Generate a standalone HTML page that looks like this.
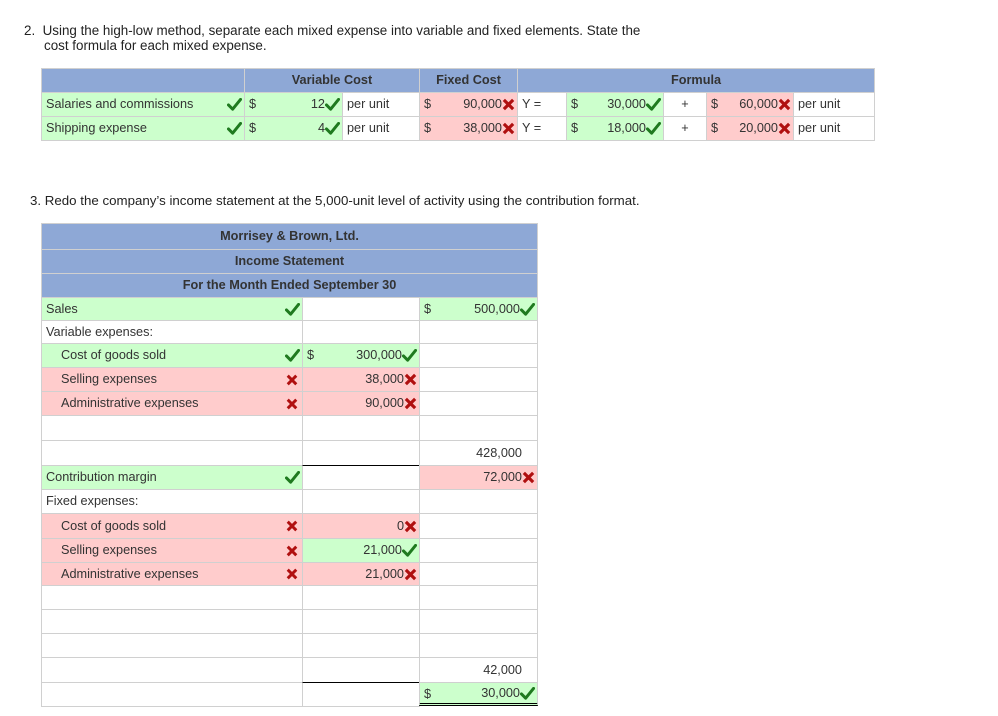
<!DOCTYPE html>
<html><head><meta charset="utf-8">
<style>
*{margin:0;padding:0}
body{width:998px;height:716px;background:#fff;position:relative;font-family:"Liberation Sans",Arial,sans-serif;font-size:12.7px;color:#333;overflow:hidden}
.t{position:absolute;white-space:nowrap;font-size:13.3px;color:#222}
.c{position:absolute;box-sizing:border-box;border:1px solid #d0d0d0;background:#fff;white-space:nowrap}
.g{background:#ccffcc}.p{background:#ffcccc}.h{background:#8ea8d6;font-weight:bold;text-align:center;color:#333}
.l{position:absolute;left:4px;top:0}
.r{position:absolute;right:2px;top:0;display:flex;align-items:center;height:100%}
.ic{display:inline-block;vertical-align:middle}
</style></head><body>
<svg width="0" height="0" style="position:absolute">
<defs>
<symbol id="ck" viewBox="0 0 16 14"><path d="M1.5 7.5 L6 12 L14.5 1.5" stroke="#1f7a1f" stroke-width="3.2" fill="none" stroke-linecap="round" stroke-linejoin="round"/></symbol>
<symbol id="xx" viewBox="0 0 14 14"><path d="M2 2 L12 12 M12 2 L2 12" stroke="#b01010" stroke-width="3.4" fill="none"/></symbol>
</defs></svg>

<div class="t" style="left:24px;top:23px;font-size:13.4px">2.&nbsp; Using the high-low method, separate each mixed expense into variable and fixed elements. State the</div>
<div class="t" style="left:44px;top:38px;font-size:13.4px">cost formula for each mixed expense.</div>

<!-- table 1 -->
<div class="c h" style="left:41px;top:68px;width:204px;height:25px"></div>
<div class="c h" style="left:244px;top:68px;width:176px;height:25px;line-height:23px">Variable Cost</div>
<div class="c h" style="left:419px;top:68px;width:99px;height:25px;line-height:23px">Fixed Cost</div>
<div class="c h" style="left:517px;top:68px;width:358px;height:25px;line-height:23px">Formula</div>

<div class="c g" style="left:41px;top:92px;width:204px;height:25px;line-height:23px"><span class="l">Salaries and commissions</span><span class="r"><svg class="ic" width="15" height="13"><use href="#ck"/></svg></span></div>
<div class="c g" style="left:244px;top:92px;width:99px;height:25px;line-height:23px"><span class="l">$</span><span class="r">12<svg class="ic" width="15" height="13"><use href="#ck"/></svg></span></div>
<div class="c" style="left:342px;top:92px;width:78px;height:25px;line-height:23px"><span class="l">per unit</span></div>
<div class="c p" style="left:419px;top:92px;width:99px;height:25px;line-height:23px"><span class="l">$</span><span class="r">90,000<svg class="ic" width="13" height="13"><use href="#xx"/></svg></span></div>
<div class="c" style="left:517px;top:92px;width:50px;height:25px;line-height:23px"><span class="l">Y =</span></div>
<div class="c g" style="left:566px;top:92px;width:98px;height:25px;line-height:23px"><span class="l">$</span><span class="r">30,000<svg class="ic" width="15" height="13"><use href="#ck"/></svg></span></div>
<div class="c" style="left:663px;top:92px;width:44px;height:25px;line-height:23px;text-align:center">+</div>
<div class="c p" style="left:706px;top:92px;width:88px;height:25px;line-height:23px"><span class="l">$</span><span class="r">60,000<svg class="ic" width="13" height="13"><use href="#xx"/></svg></span></div>
<div class="c" style="left:793px;top:92px;width:82px;height:25px;line-height:23px"><span class="l">per unit</span></div>

<div class="c g" style="left:41px;top:116px;width:204px;height:25px;line-height:23px"><span class="l">Shipping expense</span><span class="r"><svg class="ic" width="15" height="13"><use href="#ck"/></svg></span></div>
<div class="c g" style="left:244px;top:116px;width:99px;height:25px;line-height:23px"><span class="l">$</span><span class="r">4<svg class="ic" width="15" height="13"><use href="#ck"/></svg></span></div>
<div class="c" style="left:342px;top:116px;width:78px;height:25px;line-height:23px"><span class="l">per unit</span></div>
<div class="c p" style="left:419px;top:116px;width:99px;height:25px;line-height:23px"><span class="l">$</span><span class="r">38,000<svg class="ic" width="13" height="13"><use href="#xx"/></svg></span></div>
<div class="c" style="left:517px;top:116px;width:50px;height:25px;line-height:23px"><span class="l">Y =</span></div>
<div class="c g" style="left:566px;top:116px;width:98px;height:25px;line-height:23px"><span class="l">$</span><span class="r">18,000<svg class="ic" width="15" height="13"><use href="#ck"/></svg></span></div>
<div class="c" style="left:663px;top:116px;width:44px;height:25px;line-height:23px;text-align:center">+</div>
<div class="c p" style="left:706px;top:116px;width:88px;height:25px;line-height:23px"><span class="l">$</span><span class="r">20,000<svg class="ic" width="13" height="13"><use href="#xx"/></svg></span></div>
<div class="c" style="left:793px;top:116px;width:82px;height:25px;line-height:23px"><span class="l">per unit</span></div>

<div class="t" style="left:30px;top:193px">3. Redo the company’s income statement at the 5,000-unit level of activity using the contribution format.</div>

<!-- table 2 headers -->
<div class="c h" style="left:41px;top:223px;width:497px;height:27px;line-height:25px">Morrisey &amp; Brown, Ltd.</div>
<div class="c h" style="left:41px;top:249px;width:497px;height:25px;line-height:23px">Income Statement</div>
<div class="c h" style="left:41px;top:273px;width:497px;height:25px;line-height:23px">For the Month Ended September 30</div>

<div class="c g" style="left:41px;top:297px;width:262px;height:24px;line-height:22px"><span class="l">Sales</span><span class="r"><svg class="ic" width="15" height="13"><use href="#ck"/></svg></span></div>
<div class="c" style="left:302px;top:297px;width:118px;height:24px"></div>
<div class="c g" style="left:419px;top:297px;width:119px;height:24px;line-height:22px"><span class="l">$</span><span class="r">500,000<svg class="ic" width="15" height="13"><use href="#ck"/></svg></span></div>

<div class="c" style="left:41px;top:320px;width:262px;height:24px;line-height:22px"><span class="l">Variable expenses:</span></div>
<div class="c" style="left:302px;top:320px;width:118px;height:24px"></div>
<div class="c" style="left:419px;top:320px;width:119px;height:24px"></div>

<div class="c g" style="left:41px;top:343px;width:262px;height:25px;line-height:23px"><span class="l" style="left:19px">Cost of goods sold</span><span class="r"><svg class="ic" width="15" height="13"><use href="#ck"/></svg></span></div>
<div class="c g" style="left:302px;top:343px;width:118px;height:25px;line-height:23px"><span class="l">$</span><span class="r">300,000<svg class="ic" width="15" height="13"><use href="#ck"/></svg></span></div>
<div class="c" style="left:419px;top:343px;width:119px;height:25px"></div>

<div class="c p" style="left:41px;top:367px;width:262px;height:25px;line-height:23px"><span class="l" style="left:19px">Selling expenses</span><span class="r" style="right:4px"><svg class="ic" width="12" height="12"><use href="#xx"/></svg></span></div>
<div class="c p" style="left:302px;top:367px;width:118px;height:25px;line-height:23px"><span class="r">38,000<svg class="ic" width="13" height="13"><use href="#xx"/></svg></span></div>
<div class="c" style="left:419px;top:367px;width:119px;height:25px"></div>

<div class="c p" style="left:41px;top:391px;width:262px;height:25px;line-height:23px"><span class="l" style="left:19px">Administrative expenses</span><span class="r" style="right:4px"><svg class="ic" width="12" height="12"><use href="#xx"/></svg></span></div>
<div class="c p" style="left:302px;top:391px;width:118px;height:25px;line-height:23px"><span class="r">90,000<svg class="ic" width="13" height="13"><use href="#xx"/></svg></span></div>
<div class="c" style="left:419px;top:391px;width:119px;height:25px"></div>

<div class="c" style="left:41px;top:415px;width:262px;height:26px"></div>
<div class="c" style="left:302px;top:415px;width:118px;height:26px"></div>
<div class="c" style="left:419px;top:415px;width:119px;height:26px"></div>

<div class="c" style="left:41px;top:440px;width:262px;height:26px"></div>
<div class="c" style="left:302px;top:440px;width:118px;height:26px"></div>
<div class="c" style="left:419px;top:440px;width:119px;height:26px;line-height:24px"><span class="r" style="right:15px">428,000</span></div>

<div class="c g" style="left:41px;top:465px;width:262px;height:25px;line-height:23px"><span class="l">Contribution margin</span><span class="r"><svg class="ic" width="15" height="13"><use href="#ck"/></svg></span></div>
<div class="c" style="left:302px;top:465px;width:118px;height:25px;border-top:1px solid #000"></div>
<div class="c p" style="left:419px;top:465px;width:119px;height:25px;line-height:23px"><span class="r">72,000<svg class="ic" width="13" height="13"><use href="#xx"/></svg></span></div>

<div class="c" style="left:41px;top:489px;width:262px;height:25px;line-height:23px"><span class="l">Fixed expenses:</span></div>
<div class="c" style="left:302px;top:489px;width:118px;height:25px"></div>
<div class="c" style="left:419px;top:489px;width:119px;height:25px"></div>

<div class="c p" style="left:41px;top:513px;width:262px;height:26px;line-height:24px"><span class="l" style="left:19px">Cost of goods sold</span><span class="r" style="right:4px"><svg class="ic" width="12" height="12"><use href="#xx"/></svg></span></div>
<div class="c p" style="left:302px;top:513px;width:118px;height:26px;line-height:24px"><span class="r">0<svg class="ic" width="13" height="13"><use href="#xx"/></svg></span></div>
<div class="c" style="left:419px;top:513px;width:119px;height:26px"></div>

<div class="c p" style="left:41px;top:538px;width:262px;height:25px;line-height:23px"><span class="l" style="left:19px">Selling expenses</span><span class="r" style="right:4px"><svg class="ic" width="12" height="12"><use href="#xx"/></svg></span></div>
<div class="c g" style="left:302px;top:538px;width:118px;height:25px;line-height:23px"><span class="r">21,000<svg class="ic" width="15" height="13"><use href="#ck"/></svg></span></div>
<div class="c" style="left:419px;top:538px;width:119px;height:25px"></div>

<div class="c p" style="left:41px;top:562px;width:262px;height:24px;line-height:22px"><span class="l" style="left:19px">Administrative expenses</span><span class="r" style="right:4px"><svg class="ic" width="12" height="12"><use href="#xx"/></svg></span></div>
<div class="c p" style="left:302px;top:562px;width:118px;height:24px;line-height:22px"><span class="r">21,000<svg class="ic" width="13" height="13"><use href="#xx"/></svg></span></div>
<div class="c" style="left:419px;top:562px;width:119px;height:24px"></div>

<div class="c" style="left:41px;top:585px;width:262px;height:25px"></div>
<div class="c" style="left:302px;top:585px;width:118px;height:25px"></div>
<div class="c" style="left:419px;top:585px;width:119px;height:25px"></div>
<div class="c" style="left:41px;top:609px;width:262px;height:25px"></div>
<div class="c" style="left:302px;top:609px;width:118px;height:25px"></div>
<div class="c" style="left:419px;top:609px;width:119px;height:25px"></div>
<div class="c" style="left:41px;top:633px;width:262px;height:25px"></div>
<div class="c" style="left:302px;top:633px;width:118px;height:25px"></div>
<div class="c" style="left:419px;top:633px;width:119px;height:25px"></div>

<div class="c" style="left:41px;top:657px;width:262px;height:26px"></div>
<div class="c" style="left:302px;top:657px;width:118px;height:26px"></div>
<div class="c" style="left:419px;top:657px;width:119px;height:26px;line-height:24px"><span class="r" style="right:15px">42,000</span></div>

<div class="c" style="left:41px;top:682px;width:262px;height:25px"></div>
<div class="c" style="left:302px;top:682px;width:118px;height:25px;border-top:1px solid #000"></div>
<div class="c g" style="left:419px;top:682px;width:119px;height:24px;line-height:22px;border-bottom:3px double #000"><span class="l">$</span><span class="r">30,000<svg class="ic" width="15" height="13"><use href="#ck"/></svg></span></div>
</body></html>
